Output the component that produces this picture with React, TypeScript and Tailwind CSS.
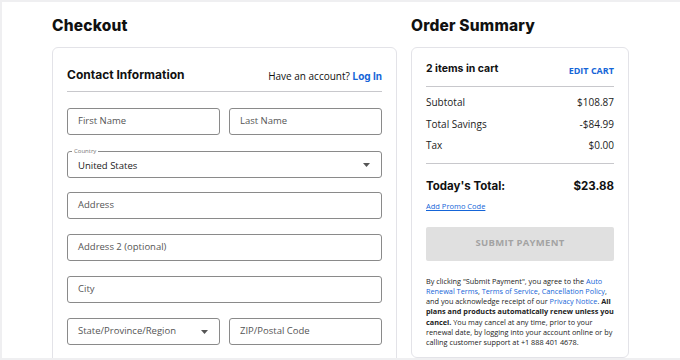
import React from 'react';

const inputCls =
  'h-[27px] w-full rounded-[3px] border border-[#8a8a8a] px-[10px] text-[9.5px] text-[#555] flex items-center';

const headFont = { fontFamily: 'Inter, sans-serif' };

function Field({ label }: { label: string }) {
  return <div className={inputCls}>{label}</div>;
}

function SelectField({ label, value }: { label?: string; value: string }) {
  return (
    <div className={`${inputCls} relative justify-between`}>
      {label && (
        <span className="absolute -top-[6px] left-[4px] bg-white px-[2px] text-[6px] leading-[10px] text-[#777]">
          {label}
        </span>
      )}
      <span className={label ? 'text-[#222] pt-[3px]' : ''}>{value}</span>
      <svg width="7" height="4" viewBox="0 0 7 4" className="mr-[1px]">
        <path d="M0 0h7L3.5 4z" fill="#555" />
      </svg>
    </div>
  );
}

export default function App() {
  return (
    <div
      className="h-[360px] w-[680px] overflow-hidden border-l-2 border-t-2 border-b-2 border-[#efeff1] bg-white text-[#111]"
      style={{ fontFamily: '"Open Sans", sans-serif' }}
    >
      <div className="flex gap-[14px] pl-[50px]">
        {/* checkout */}
        <div className="w-[345px]">
          <h1 className="mt-[12px] h-[33px] text-[15.5px] font-extrabold tracking-[0.2px]" style={headFont}>
            Checkout
          </h1>
          <div className="h-[320px] rounded-[6px] border border-[#e3e3e8] px-[14px]">
            <div className="flex h-[43px] items-end justify-between pb-[7px]">
              <span className="text-[12px] font-bold" style={headFont}>
                Contact Information
              </span>
              <span className="text-[10px]">
                Have an account?{' '}
                <span className="font-bold text-[#1565d8]" style={headFont}>Log In</span>
              </span>
            </div>
            <div className="h-px bg-[#c8c8cc]" />
            <div className="mt-[16px] flex flex-col gap-[15px]">
              <div className="grid grid-cols-2 gap-[9px]">
                <Field label="First Name" />
                <Field label="Last Name" />
              </div>
              <div className="mt-[1px] mb-[-1px]">
                <SelectField label="Country" value="United States" />
              </div>
              <Field label="Address" />
              <Field label="Address 2 (optional)" />
              <Field label="City" />
              <div className="grid grid-cols-2 gap-[9px]">
                <SelectField value="State/Province/Region" />
                <Field label="ZIP/Postal Code" />
              </div>
            </div>
          </div>
        </div>

        {/* summary */}
        <div className="w-[218px]">
          <h1 className="mt-[12px] h-[33px] text-[15.5px] font-extrabold tracking-[0.2px]" style={headFont}>
            Order Summary
          </h1>
          <div className="h-[311px] rounded-[6px] border border-[#e3e3e8] px-[14px]">
            <div className="flex h-[38px] items-end justify-between pb-[9px]">
              <span className="text-[10.5px] font-bold" style={headFont}>2 items in cart</span>
              <span className="text-[9px] font-bold text-[#1565d8]">EDIT CART</span>
            </div>
            <div className="h-px bg-[#c8c8cc]" />
            <div className="mt-[5px] flex flex-col text-[10px] text-[#222]">
              <div className="flex h-[21.5px] items-center justify-between">
                <span>Subtotal</span>
                <span>$108.87</span>
              </div>
              <div className="flex h-[21.5px] items-center justify-between">
                <span>Total Savings</span>
                <span>-$84.99</span>
              </div>
              <div className="flex h-[21.5px] items-center justify-between">
                <span>Tax</span>
                <span>$0.00</span>
              </div>
            </div>
            <div className="mt-[6px] h-px bg-[#c8c8cc]" />
            <div
              className="mt-[14px] flex h-[18px] items-center justify-between text-[11.5px] font-bold"
              style={headFont}
            >
              <span>Today's Total:</span>
              <span>$23.88</span>
            </div>
            <div className="mt-[5px] text-[7.5px] leading-[11px] text-[#1565d8] underline">Add Promo Code</div>
            <div className="mt-[15px] flex h-[34px] items-center justify-center rounded-[2px] bg-[#e0e0e0] text-[9.5px] font-bold tracking-[0.3px] text-[#a3a3a3]">
              SUBMIT PAYMENT
            </div>
            <p className="mt-[15px] text-[7.3px] leading-[10.3px] text-[#222]">
              By clicking "Submit Payment", you agree to the{' '}
              <span className="text-[#1565d8]">Auto Renewal Terms</span>,{' '}
              <span className="text-[#1565d8]">Terms of Service</span>,{' '}
              <span className="text-[#1565d8]">Cancellation Policy</span>, and you acknowledge receipt of our{' '}
              <span className="text-[#1565d8]">Privacy Notice</span>.{' '}
              <b>All plans and products automatically renew unless you cancel.</b> You may cancel at any time,
              prior to your renewal date, by logging into your account online or by calling customer support at +1
              888 401 4678.
            </p>
          </div>
        </div>
      </div>
    </div>
  );
}
